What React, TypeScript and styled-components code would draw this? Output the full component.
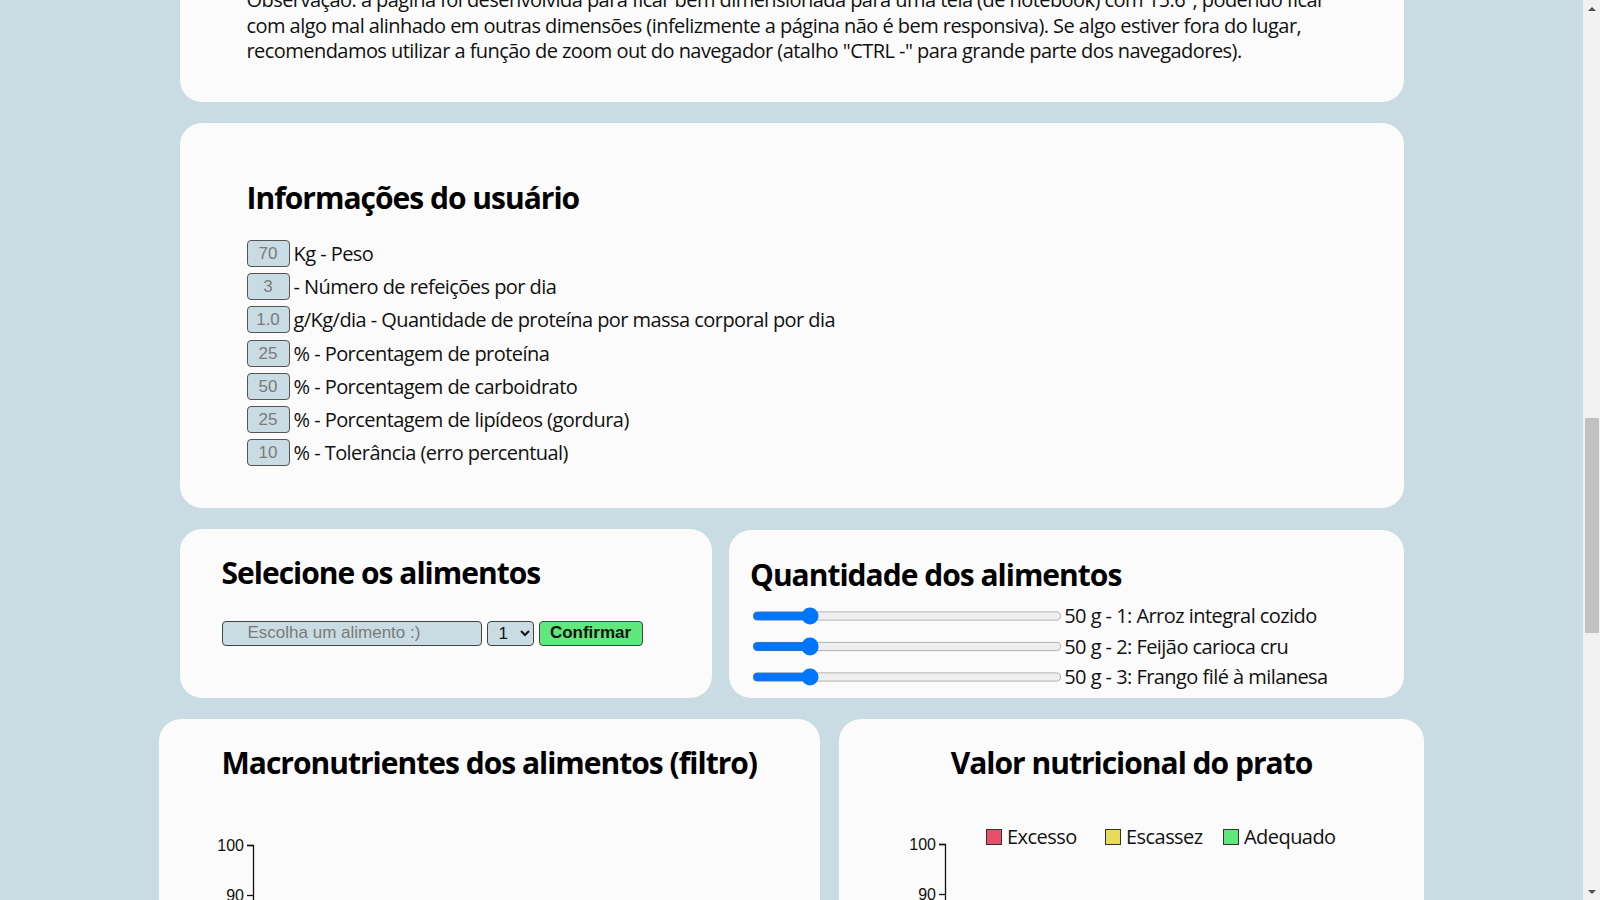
import React, { useLayoutEffect, useRef } from 'react';
import styled, { createGlobalStyle } from 'styled-components';

const GlobalStyle = createGlobalStyle`
  html, body {
    margin: 0;
    padding: 0;
  }

  body {
    background: #c9dce4;
    color: #111;
    font-family: 'Open Sans', 'Liberation Sans', sans-serif;
  }
`;

const Page = styled.main`
  display: flex;
  flex-direction: column;
  align-items: center;
  gap: 21px;
  padding: 24px 17px 60px 0;
`;

const Card = styled.section`
  box-sizing: border-box;
  background: #fbfbfb;
  border-radius: 22px;
`;

const IntroCard = styled(Card)`
  width: 1224px;
  padding: 40px 67px 38px;
`;

const UserCard = styled(Card)`
  width: 1224px;
  padding: 54px 67px 38px;
`;

const Title = styled.h1`
  margin: 0 0 20px;
  font-size: 34px;
  line-height: 46px;
  font-weight: 700;
  color: #000;
`;

const Heading = styled.h2<{ $center?: boolean; $gap?: number }>`
  margin: 0 0 ${(p) => p.$gap ?? 0}px;
  font-size: 30px;
  line-height: 41px;
  font-weight: 700;
  letter-spacing: -1px;
  color: #000;
  text-align: ${(p) => (p.$center ? 'center' : 'left')};
`;

const Paragraph = styled.p`
  margin: 0 0 12px;
  font-size: 20px;
  line-height: 25.5px;
  letter-spacing: -0.55px;

  &:last-child {
    margin-bottom: 0;
  }
`;

const InfoRow = styled.label`
  display: flex;
  align-items: center;
  gap: 4px;
  height: 33.3px;
  font-size: 20px;
  letter-spacing: -0.55px;
`;

const NumberBox = styled.input`
  box-sizing: border-box;
  width: 43px;
  height: 27px;
  padding: 1px 0 0;
  border: 1px solid #555;
  border-radius: 4px;
  background: #c9dce4;
  color: #7a7a7a;
  font-family: 'Liberation Sans', Arial, sans-serif;
  font-size: 17px;
  text-align: center;
`;

const SplitRow = styled.div<{ $width: number; $gap: number }>`
  display: flex;
  align-items: flex-end;
  gap: ${(p) => p.$gap}px;
  width: ${(p) => p.$width}px;
`;

const SelectCard = styled(Card)`
  width: 532px;
  padding: 23px 42px 52px;
`;

const AmountCard = styled(Card)`
  flex: 1;
  padding: 23.5px 21px 5.5px;
`;

const Controls = styled.div`
  display: flex;
  align-items: center;
  gap: 5px;
  height: 25px;
`;

const FieldBase = `
  box-sizing: border-box;
  height: 25px;
  border: 1px solid #444;
  border-radius: 4px;
  font-family: 'Liberation Sans', Arial, sans-serif;
  font-size: 17px;
`;

const FoodInput = styled.input`
  ${FieldBase}
  width: 260px;
  padding: 0 0 0 25px;
  background: #c9dce4;
  color: #222;

  &::placeholder {
    color: #7a7a7a;
  }
`;

const CountSelect = styled.select`
  ${FieldBase}
  width: 47px;
  padding: 0 0 0 7px;
  background: #c9dce4;
  color: #111;
`;

const ConfirmButton = styled.button`
  ${FieldBase}
  width: 104px;
  padding: 0;
  background: #5fe87c;
  color: #111;
  font-weight: 700;
  cursor: pointer;
`;

const SliderRow = styled.label`
  display: flex;
  align-items: center;
  gap: 2px;
  height: 30.5px;
  font-size: 20px;
  letter-spacing: -0.55px;
`;

const Slider = styled.input`
  zoom: 1.15;
  width: 269.5px;
  margin: 0 0 0 2px;
`;

const ChartCard = styled(Card)<{ $width: number }>`
  width: ${(p) => p.$width}px;
  height: 640px;
  padding-top: 23.5px;
`;

const ChartSvg = styled.svg`
  display: block;
  overflow: visible;
`;

const AxisText = styled.text`
  font-family: 'Liberation Sans', Arial, sans-serif;
  font-size: 16px;
  fill: #111;
`;

const LegendText = styled.text`
  font-family: 'Open Sans', sans-serif;
  font-size: 20px;
  letter-spacing: -0.55px;
  fill: #111;
`;

/* the window's scrollbar, as the browser drew it in the screenshot */
const ScrollTrack = styled.div`
  position: fixed;
  top: 0;
  right: 0;
  bottom: 0;
  width: 17px;
  display: flex;
  flex-direction: column;
  justify-content: space-between;
  background: #f1f1f1;
`;

const ScrollArrow = styled.div<{ $down?: boolean }>`
  display: flex;
  align-items: center;
  justify-content: center;
  height: 17px;

  &::before {
    content: '';
    border-left: 4px solid transparent;
    border-right: 4px solid transparent;
    ${(p) => (p.$down ? 'border-top: 4px solid #505050;' : 'border-bottom: 4px solid #505050;')}
  }
`;

const ScrollThumb = styled.div`
  position: absolute;
  top: 418px;
  left: 2px;
  right: 1px;
  height: 215px;
  background: #c1c1c1;
`;

const userFields = [
  { value: '70', label: 'Kg - Peso' },
  { value: '3', label: '- Número de refeições por dia' },
  { value: '1.0', label: 'g/Kg/dia - Quantidade de proteína por massa corporal por dia' },
  { value: '25', label: '% - Porcentagem de proteína' },
  { value: '50', label: '% - Porcentagem de carboidrato' },
  { value: '25', label: '% - Porcentagem de lipídeos (gordura)' },
  { value: '10', label: '% - Tolerância (erro percentual)' },
];

const foods = ['Arroz integral cozido', 'Feijão carioca cru', 'Frango filé à milanesa'];

const legend = [
  { label: 'Excesso', color: '#e8506a', x: 147 },
  { label: 'Escassez', color: '#e8da5a', x: 266 },
  { label: 'Adequado', color: '#5fe87c', x: 384 },
];

const ticks = [100, 90, 80, 70, 60, 50, 40, 30, 20, 10, 0];

const YAxis = ({ x, top }: { x: number; top: number }) => {
  const bottom = top + (ticks.length - 1) * 50;
  return (
    <g transform={`translate(${x},0)`}>
      <path d={`M-6,${top}H0.5V${bottom}H-6`} fill="none" stroke="#111" strokeWidth={1.3} />
      {ticks.map((t, i) => (
        <g key={t} transform={`translate(0,${top + i * 50})`}>
          <line x1={-6} x2={0} stroke="#111" strokeWidth={1.3} />
          <AxisText x={-9} dy="0.32em" textAnchor="end">
            {t}
          </AxisText>
        </g>
      ))}
    </g>
  );
};

const App = () => {
  const userRef = useRef<HTMLElement>(null);

  useLayoutEffect(() => {
    const el = userRef.current;
    if (el) window.scrollTo(0, el.getBoundingClientRect().top + window.scrollY - 123);
  }, []);

  return (
    <>
      <GlobalStyle />
      <Page>
        <IntroCard>
          <Title>Montador de pratos</Title>
          <Paragraph>
            Informe seus dados, escolha os alimentos e ajuste as quantidades para ver se o prato atende às suas
            metas de macronutrientes.
          </Paragraph>
          <Paragraph>
            Observação: a página foi desenvolvida para ficar bem dimensionada para uma tela (de notebook) com 15.6",
            podendo ficar com algo mal alinhado em outras dimensões (infelizmente a página não é bem responsiva). Se
            algo estiver fora do lugar, recomendamos utilizar a função de zoom out do navegador (atalho "CTRL -" para
            grande parte dos navegadores).
          </Paragraph>
        </IntroCard>

        <UserCard ref={userRef}>
          <Heading $gap={19}>Informações do usuário</Heading>
          {userFields.map((f) => (
            <InfoRow key={f.label}>
              <NumberBox type="text" defaultValue={f.value} />
              {f.label}
            </InfoRow>
          ))}
        </UserCard>

        <SplitRow $width={1224} $gap={17.5}>
          <SelectCard>
            <Heading $gap={28}>Selecione os alimentos</Heading>
            <Controls>
              <FoodInput type="text" placeholder="Escolha um alimento :)" />
              <CountSelect defaultValue="1">
                <option>1</option>
                <option>2</option>
                <option>3</option>
              </CountSelect>
              <ConfirmButton type="button">Confirmar</ConfirmButton>
            </Controls>
          </SelectCard>
          <AmountCard>
            <Heading $gap={6}>Quantidade dos alimentos</Heading>
            {foods.map((food, i) => (
              <SliderRow key={food}>
                <Slider type="range" min={0} max={300} defaultValue={50} />
                50 g - {i + 1}: {food}
              </SliderRow>
            ))}
          </AmountCard>
        </SplitRow>

        <SplitRow $width={1265.5} $gap={19}>
          <ChartCard $width={661}>
            <Heading $center>Macronutrientes dos alimentos (filtro)</Heading>
            <ChartSvg width={661} height={580}>
              <YAxis x={94} top={62.5} />
              <line x1={94} x2={620} y1={562.5} y2={562.5} stroke="#111" strokeWidth={1.3} />
            </ChartSvg>
          </ChartCard>
          <ChartCard $width={585.5}>
            <Heading $center>Valor nutricional do prato</Heading>
            <ChartSvg width={585.5} height={580}>
              {legend.map((l) => (
                <g key={l.label} transform={`translate(${l.x},46)`}>
                  <rect x={0.5} y={0.5} width={15} height={15} fill={l.color} stroke="#333" />
                  <LegendText x={21} y={8} dy="0.36em">
                    {l.label}
                  </LegendText>
                </g>
              ))}
              <YAxis x={106} top={61.5} />
              <line x1={106} x2={550} y1={561.5} y2={561.5} stroke="#111" strokeWidth={1.3} />
            </ChartSvg>
          </ChartCard>
        </SplitRow>
      </Page>

      <ScrollTrack aria-hidden>
        <ScrollArrow />
        <ScrollThumb />
        <ScrollArrow $down />
      </ScrollTrack>
    </>
  );
};

export default App;
